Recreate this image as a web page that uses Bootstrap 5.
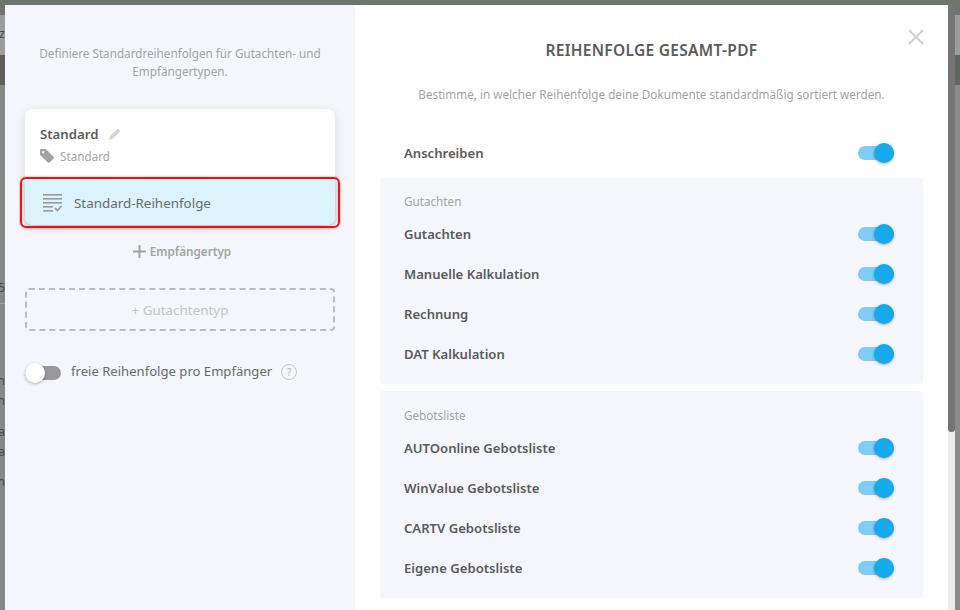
<!DOCTYPE html>
<html lang="de"><head><meta charset="utf-8"><title>Reihenfolge</title>
<link href="https://cdn.jsdelivr.net/npm/bootstrap@5.3.0/dist/css/bootstrap.min.css" rel="stylesheet">
<style>
html,body{margin:0;height:610px;overflow:hidden;background:#878787}
body{font-family:"Noto Sans","Open Sans",sans-serif;font-size:13px;color:#5a5a5a}
.stage{height:610px;width:960px}
.topband{height:5px;background:#6e766f}
.main{height:605px}
.lstrip{width:5px;background:#878787;overflow:hidden;color:#4a4a4a;font-size:12px;white-space:nowrap}
.lstrip div{display:flex;justify-content:flex-end}
.lseg1{height:10px;background:#6e766f}
.lseg2{height:40px;background:#9d9d9d;line-height:37px}
.lseg3{height:30px;background:#5f5e58}
.lgap5{height:198px}
.lnum{height:21px;line-height:10px;border-bottom:1px solid #a2a2a2}
.lgap{height:67px}
.lt{height:20px;line-height:20px}
.lgap2{height:11px}
.lgap3{height:10px}
.dlg{width:943px;height:605px;background:#fff;overflow:hidden}
.sidebar{width:350px;background:#f4f6fb;padding:39px 20px 0}
.intro{font-size:11.7px;line-height:18px;color:#a3a3a3;text-align:center;margin:0 0 29px}
.stdcard{background:#fff;border-radius:8px;box-shadow:0 2px 10px rgba(0,0,0,.12);height:116px}
.stdhead{padding:15px 15px 0}
.stdname{font-size:13.200px;font-weight:600;color:#5c5c5c;line-height:20px}
.penc{margin-left:3px}
.stdtag{font-size:11.700px;color:#a3a3a3;line-height:18px;margin-top:3px;gap:6px}
.rowsel{height:45px;margin-top:-45px;background:#dcf3fc;border-radius:0 0 8px 8px;padding-left:18px;color:#6a6a6a;font-size:13.400px;position:relative;box-shadow:0 2px 6px rgba(0,0,0,.18)}
.rowsel::after{content:"";position:absolute;inset:-3px -5px -3px -5px;border:2px solid #f01010;border-radius:6px;box-shadow:0 0 2px rgba(240,16,16,.5)}
.rowtxt{margin-left:12px;padding-top:1px}
.addrec{font-size:11.700px;font-weight:600;color:#a3a3a3;margin-top:16px;line-height:20px;padding-left:4px}
.addtype{height:43px;margin-top:27px;padding-top:1px;border:2px dashed #bcbcc0;border-radius:4px;color:#c4c4c4;font-size:13.400px}
.freerow{margin-top:32px;font-size:13.100px;color:#6a6a6a;height:20px}
.freelbl{margin-left:10px;margin-top:-3px}
.tgl{width:36px;height:14px;border-radius:7px;position:relative;flex:none}
.tgl i{position:absolute;top:-3px;width:20px;height:20px;border-radius:50%;display:block;box-shadow:0 1px 3px rgba(0,0,0,.3)}
.tgl.on{background:#7dcdf5;margin-top:-2px}.tgl.on i{right:0;background:#16a9eb}
.tgl.off{background:#98989d}.tgl.off i{left:0;background:#fff}
.hint{width:16px;height:16px;border:1px solid #c4c4c4;border-radius:50%;font-size:10px;line-height:14px;color:#b4b4b4;text-align:center;margin-left:9px;margin-top:-3px}
.content{width:593px;position:relative;padding:0 25px}
.ttl{font-size:15.500px;font-weight:600;letter-spacing:.3px;color:#5a5a5a;text-align:center;margin:35px 0 0;line-height:21px}
.sub{font-size:11.700px;color:#a3a3a3;text-align:center;margin:24px 0 0;line-height:18px}
.closex{position:absolute;top:24px;right:24px;width:16px;height:16px}
.item{height:40px;padding:2px 29px 0 24px;font-size:13.100px;font-weight:600;color:#5a5a5a}
.topitem{margin-top:30px}
.grp{background:#f4f6fb;border-radius:4px;margin-bottom:7px}
.grp1{margin-top:5px;height:206px}
.grp2{height:207px}
.grplabel{font-size:11.700px;color:#a3a3a3;padding:14px 24px 0;line-height:18px;height:36px}
.grp2 .grplabel{height:37px;padding-top:15px}
.sbar{width:7px;background:#ececec}
.thumb{height:427px;background:#757575;border-radius:0 0 3px 3px}
.rstrip{width:5px;overflow:hidden}
.rseg1{height:10px;background:#6e766f}
.rseg2{height:40px;background:#9d9d9d}
.rseg3{height:30px;background:#5f6860}
.rseg4{background:#8b8b8b;height:525px}
</style></head><body>
<div class="stage">
<div class="topband"></div>
<div class="main d-flex">
<div class="lstrip"><div class="lseg1"></div><div class="lseg2">rz</div><div class="lseg3"></div><div class="lgap5"></div><div class="lnum">5</div><div class="lgap"></div><div class="lt">n</div><div class="lt">n</div><div class="lgap2"></div><div class="lt">a</div><div class="lt">a</div><div class="lgap3"></div><div class="lt">n</div></div>
<div class="dlg d-flex">
<aside class="sidebar">
<p class="intro">Definiere Standardreihenfolgen für Gutachten- und Empfängertypen.</p>
<div class="stdcard">
<div class="stdhead">
<div class="stdname d-flex align-items-center gap-2">Standard
<svg width="12" height="12" viewBox="0 0 12 12" class="penc"><path d="M0 12l.8-3.400L8.200 1.200a1 1 0 0 1 1.400 0l1.200 1.200a1 1 0 0 1 0 1.400L3.400 11.200z" fill="#d6d6d6"/></svg></div>
<div class="stdtag d-flex align-items-center">
<svg width="14" height="14" viewBox="0 0 13 13"><path d="M0 1.200C0 .5.5 0 1.200 0h4.200l7.200 7.200c.5.5.5 1.200 0 1.700l-3.700 3.700c-.5.5-1.200.5-1.700 0L0 5.400z" fill="#a3a3a3"/><circle cx="3" cy="3" r="1.100" fill="#fff"/></svg>
Standard</div>
</div>
</div>
<div class="rowsel d-flex align-items-center">
<svg width="19" height="18" viewBox="0 0 19 18"><g fill="#9a9a9a"><rect width="19" height="1.600"/><rect y="4" width="19" height="1.600"/><rect y="8" width="19" height="1.600"/><rect y="12" width="10" height="1.600"/><rect y="16" width="10" height="1.600"/></g><path d="M12 14l2.500 2.500L18.500 12" fill="none" stroke="#9a9a9a" stroke-width="1.800"/></svg>
<span class="rowtxt">Standard-Reihenfolge</span></div>
<div class="addrec d-flex justify-content-center align-items-center gap-1">
<svg width="13" height="13" viewBox="0 0 13 13"><path d="M5.500 0h2v5.500H13v2H7.500V13h-2V7.500H0v-2h5.500z" fill="#a3a3a3"/></svg>Empfängertyp</div>
<div class="addtype d-flex justify-content-center align-items-center">+ Gutachtentyp</div>
<div class="freerow d-flex align-items-center">
<span class="tgl off"><i></i></span><span class="freelbl">freie Reihenfolge pro Empfänger</span><span class="hint">?</span></div>
</aside>
<section class="content">
<h1 class="ttl">REIHENFOLGE GESAMT-PDF</h1>
<p class="sub">Bestimme, in welcher Reihenfolge deine Dokumente standardmäßig sortiert werden.</p>
<svg class="closex" viewBox="0 0 16 16"><path d="M1 1l14 14M15 1L1 15" stroke="#cfcfcf" stroke-width="2" fill="none"/></svg>
<div class="item topitem d-flex align-items-center justify-content-between">Anschreiben<span class="tgl on"><i></i></span></div>
<div class="grp grp1">
<div class="grplabel">Gutachten</div>
<div class="item d-flex align-items-center justify-content-between">Gutachten<span class="tgl on"><i></i></span></div>
<div class="item d-flex align-items-center justify-content-between">Manuelle Kalkulation<span class="tgl on"><i></i></span></div>
<div class="item d-flex align-items-center justify-content-between">Rechnung<span class="tgl on"><i></i></span></div>
<div class="item d-flex align-items-center justify-content-between">DAT Kalkulation<span class="tgl on"><i></i></span></div>
</div>
<div class="grp grp2">
<div class="grplabel">Gebotsliste</div>
<div class="item d-flex align-items-center justify-content-between">AUTOonline Gebotsliste<span class="tgl on"><i></i></span></div>
<div class="item d-flex align-items-center justify-content-between">WinValue Gebotsliste<span class="tgl on"><i></i></span></div>
<div class="item d-flex align-items-center justify-content-between">CARTV Gebotsliste<span class="tgl on"><i></i></span></div>
<div class="item d-flex align-items-center justify-content-between">Eigene Gebotsliste<span class="tgl on"><i></i></span></div>
</div>
</section>
</div>
<div class="sbar"><div class="thumb"></div></div>
<div class="rstrip"><div class="rseg1"></div><div class="rseg2"></div><div class="rseg3"></div><div class="rseg4"></div></div>
</div>
</div>
</body></html>
